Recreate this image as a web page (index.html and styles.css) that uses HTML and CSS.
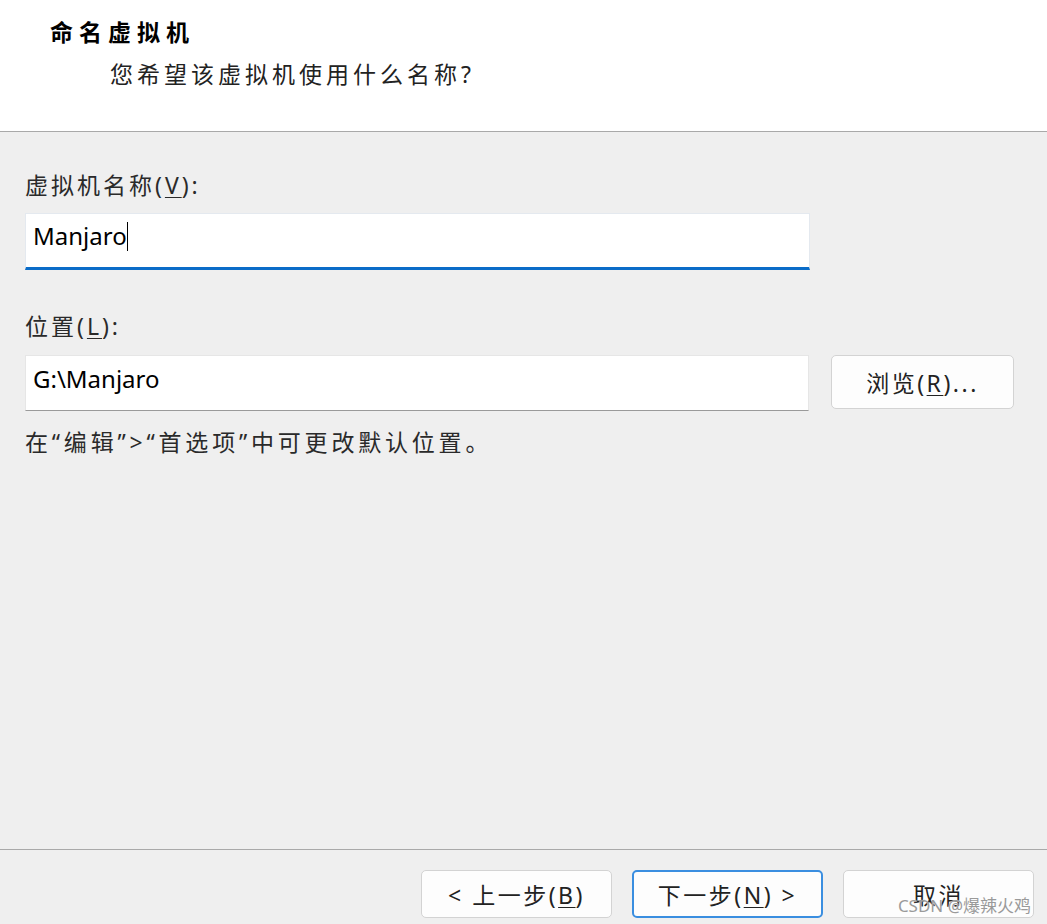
FILE: index.html
```html
<!DOCTYPE html>
<html lang="zh-CN">
<head>
<meta charset="utf-8">
<title>命名虚拟机</title>
<link rel="stylesheet" href="styles.css">
</head>
<body>
<div class="wizard">
  <header class="head">
    <div class="title">命名虚拟机</div>
    <div class="subtitle">您希望该虚拟机使用什么名称?</div>
  </header>
  <main class="body">
    <div class="label">虚拟机名称(<u>V</u>):</div>
    <div class="field field-active"><span class="value">Manjaro</span><span class="caret"></span></div>
    <div class="label label-2">位置(<u>L</u>):</div>
    <div class="row">
      <div class="field field-plain"><span class="value">G:\Manjaro</span></div>
      <button class="btn btn-browse">浏览(<u>R</u>)...</button>
    </div>
    <div class="hint">在“编辑”&gt;“首选项”中可更改默认位置。</div>
  </main>
  <footer class="foot">
    <button class="btn btn-nav">&lt; 上一步(<u>B</u>)</button>
    <button class="btn btn-nav btn-default">下一步(<u>N</u>) &gt;</button>
    <button class="btn btn-nav">取消</button>
    <div class="watermark">CSDN @爆辣火鸡</div>
  </footer>
</div>
</body>
</html>
```

FILE: styles.css
```css
* { box-sizing: border-box; }
html, body { margin: 0; padding: 0; }
body {
  width: 1047px;
  height: 924px;
  overflow: hidden;
  background: #efefef;
  font-family: "Noto Sans", "Noto Sans CJK SC", sans-serif;
  color: #222;
}
.wizard {
  display: flex;
  flex-direction: column;
  height: 924px;
  position: relative;
}
.head {
  height: 132px;
  background: #ffffff;
  border-bottom: 1px solid #a9a9a9;
  padding-top: 17px;
}
.title {
  padding-left: 50px;
  font-size: 23px;
  line-height: 30px;
  font-weight: 700;
  letter-spacing: 6px;
  color: #000;
}
.subtitle {
  margin-top: 12px;
  padding-left: 110px;
  font-size: 23px;
  line-height: 30px;
  letter-spacing: 4px;
  color: #222;
}
.body {
  flex: 1;
  padding: 38px 33px 0 25px;
  display: flex;
  flex-direction: column;
  align-items: flex-start;
}
.label {
  font-size: 23px;
  line-height: 30px;
  letter-spacing: 3px;
  color: #2a2a2a;
}
.label u { text-underline-offset: 3px; text-decoration-thickness: 1px; }
.label-2 { margin-top: 41px; }
.field {
  background: #fff;
  width: 785px;
  font-size: 24px;
  color: #000;
  display: flex;
  align-items: flex-start;
  padding-left: 7px;
}
.field-active {
  margin-top: 13px;
  height: 57px;
  border: 1px solid #e4e9ef;
  border-bottom: 3px solid #0a6cc8;
  padding-top: 4px;
}
.field-plain {
  height: 56px;
  border: 1px solid #e6e6e6;
  border-bottom: 1px solid #9a9a9a;
  padding-top: 5px;
  width: 784px;
}
.value { line-height: 36px; }
.caret {
  display: inline-block;
  width: 1px;
  height: 29px;
  background: #000;
  margin-top: 4px;
  margin-left: 0;
}
.row {
  margin-top: 14px;
  display: flex;
  align-items: flex-start;
  gap: 22px;
}
.btn {
  font-family: "Noto Sans", "Noto Sans CJK SC", sans-serif;
  font-size: 23px;
  color: #222;
  background: #fdfdfd;
  border: 1px solid #d3d3d3;
  border-radius: 5px;
  padding: 0;
  letter-spacing: 2.5px;
}
.btn u { text-underline-offset: 3px; text-decoration-thickness: 1px; }
.btn-browse {
  width: 183px;
  height: 54px;
}
.hint {
  margin-top: 16px;
  font-size: 23px;
  line-height: 30px;
  letter-spacing: 3.8px;
  color: #2a2a2a;
}
.foot {
  height: 75px;
  border-top: 1px solid #a9a9a9;
  display: flex;
  justify-content: flex-end;
  align-items: flex-start;
  gap: 20px;
  padding: 20px 13px 0 0;
}
.btn-nav {
  width: 191px;
  height: 48px;
}
.btn-default {
  border: 2px solid #3a8ee0;
}
.watermark {
  position: absolute;
  right: 16px;
  bottom: 7px;
  font-size: 17px;
  line-height: 22px;
  color: #9a9a9a;
  letter-spacing: 0;
  text-shadow: 0 0 1px #ffffff;
}
```
